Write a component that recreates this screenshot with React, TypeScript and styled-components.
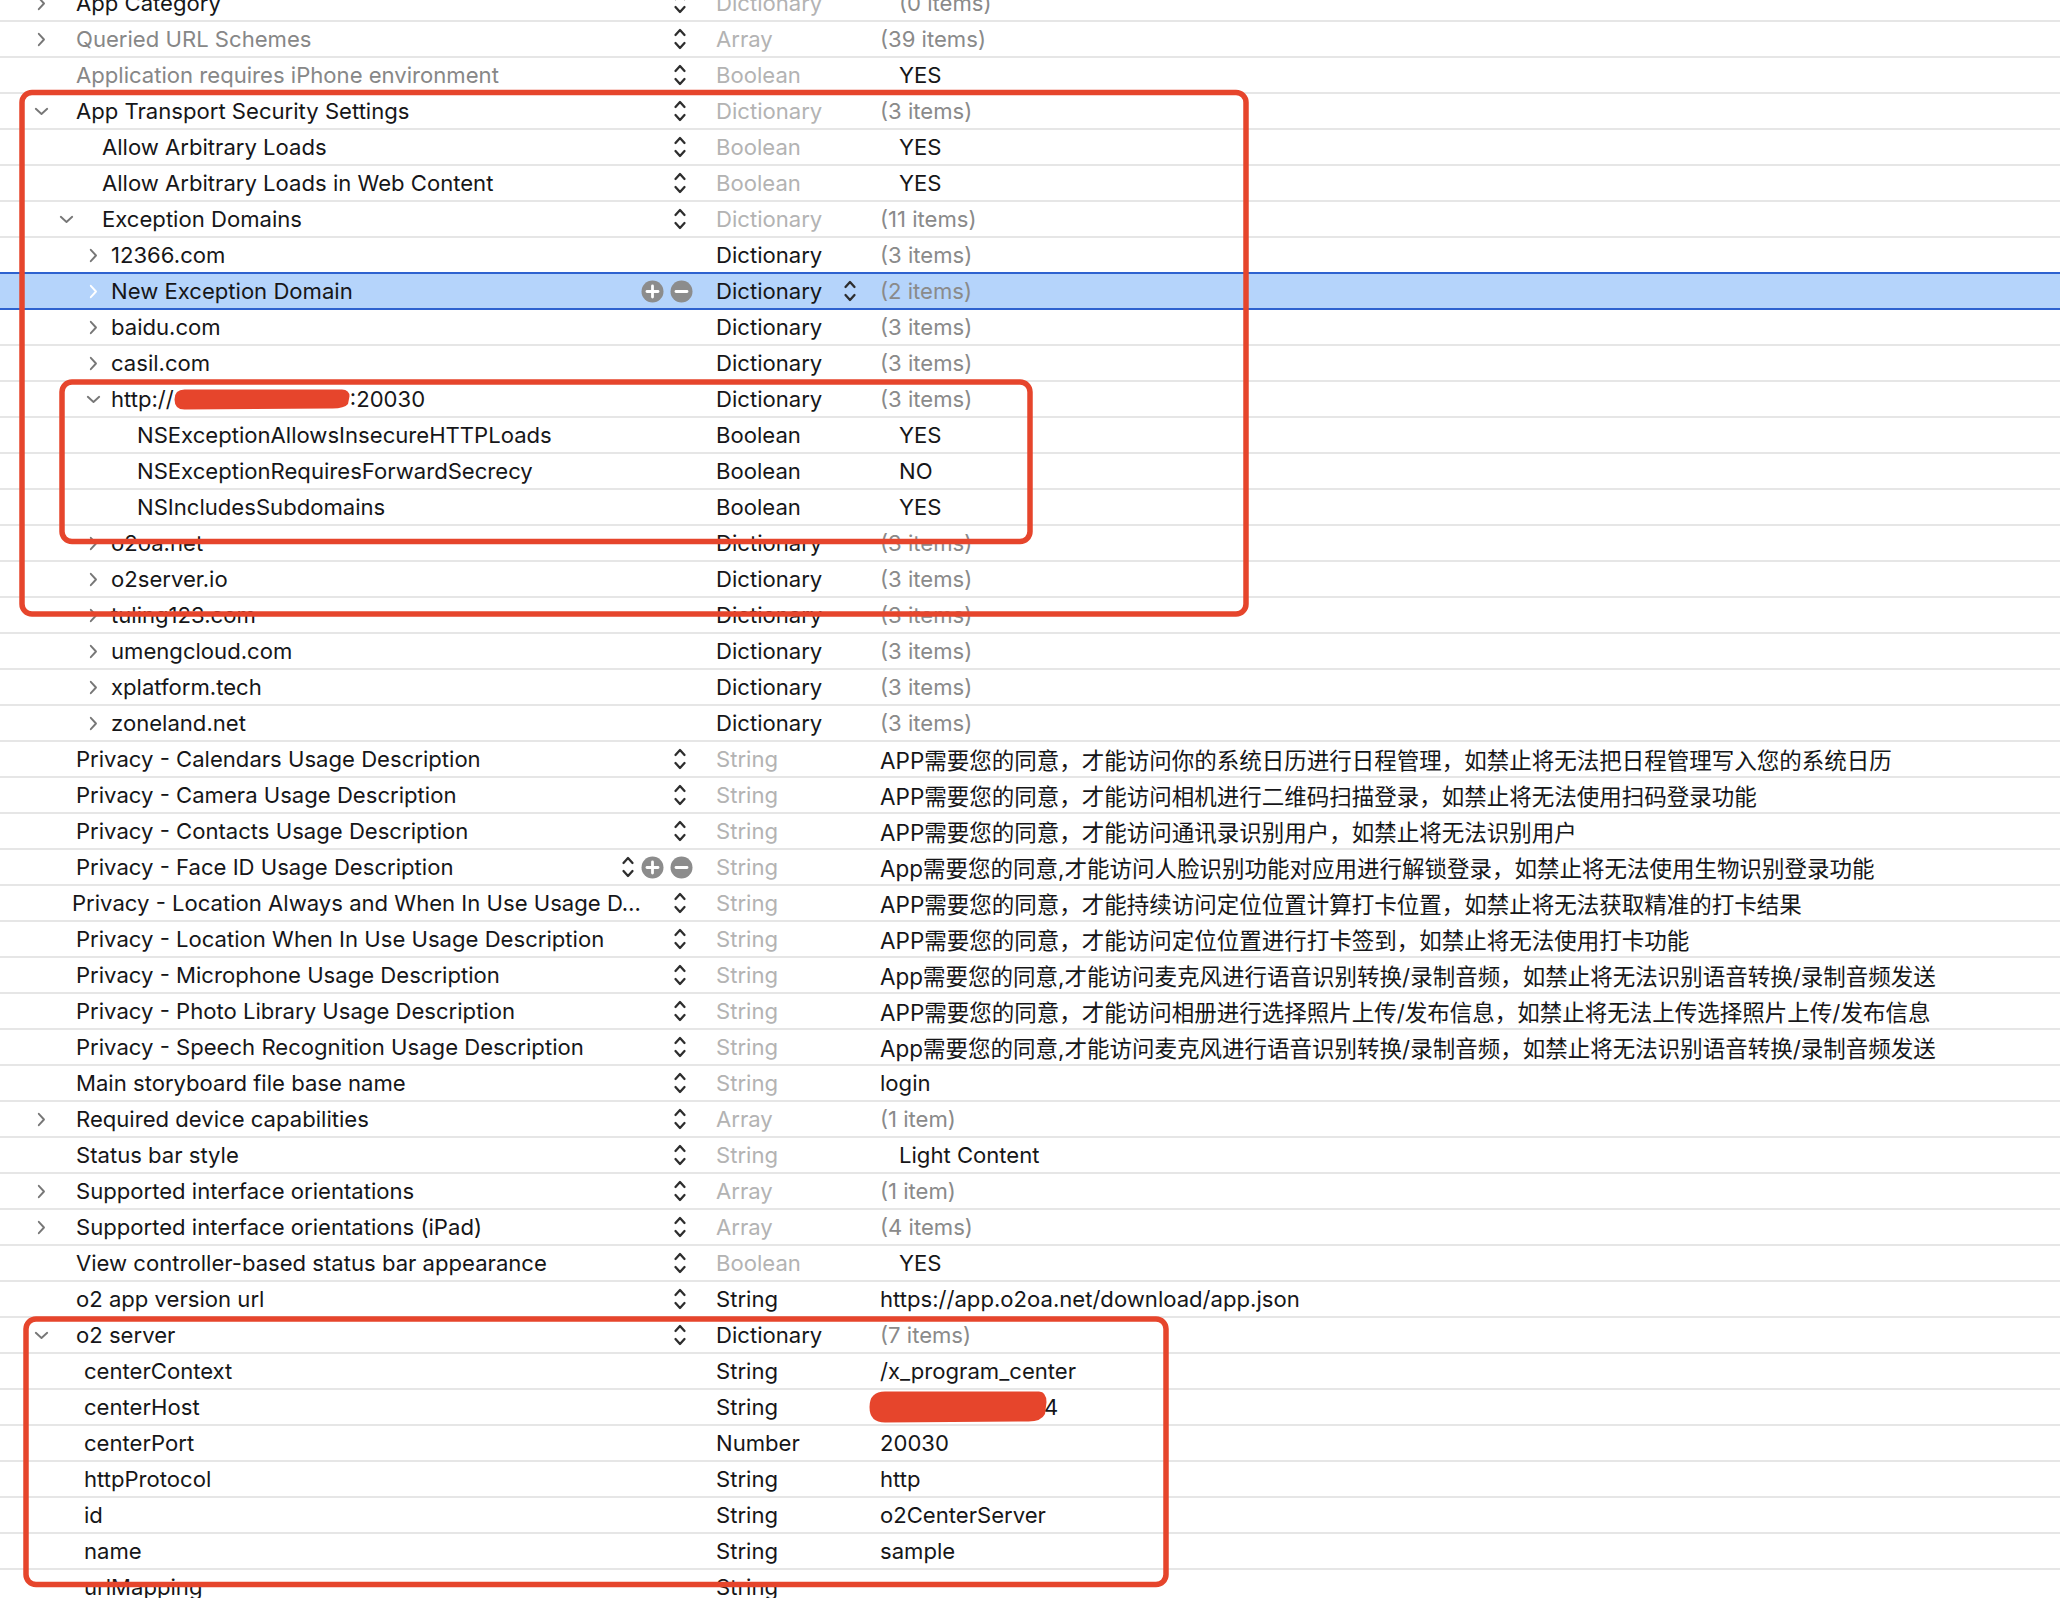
import React from "react";
import styled, { createGlobalStyle, css } from "styled-components";

const GlobalStyle = createGlobalStyle`
  html, body {
    margin: 0;
    padding: 0;
    background: #ffffff;
    overflow: hidden;
  }
  body {
    font-family: Inter, "Noto Sans", "Noto Sans CJK SC", sans-serif;
    -webkit-font-smoothing: antialiased;
  }
`;

const RED = "#e6452c";

type Tone = "dark" | "muted" | "light" | "gray" | "white";

const toneColor = (t: Tone) =>
  ({
    dark: "#161618",
    muted: "#878787",
    light: "#b3b3b3",
    gray: "#8a8a8a",
    white: "#ffffff",
  }[t]);

const Page = styled.div`
  position: relative;
  width: 2060px;
  height: 1598px;
  overflow: hidden;
`;

const List = styled.div`
  display: flex;
  flex-direction: column;
  margin-top: -14px;
`;

const Row = styled.div<{ $selected?: boolean }>`
  display: grid;
  grid-template-columns: 716px 164px 1fr;
  align-items: center;
  height: 34px;
  border-bottom: 2px solid #e6e6e6;
  font-size: 22.1px;
  color: #161618;
  ${(p) =>
    p.$selected &&
    css`
      background: #b5d4fb;
      border-bottom-color: #2e62cf;
      box-shadow: 0 -2px 0 #2e62cf;
      color: #15192a;
    `}
`;

const KeyCell = styled.div`
  display: flex;
  align-items: center;
  height: 100%;
  min-width: 0;
`;

const DisclosureSvg = styled.svg<{ $x: number; $w: number; $light?: boolean }>`
  flex-shrink: 0;
  margin-left: ${(p) => p.$x - p.$w / 2}px;
  fill: none;
  stroke: ${(p) => (p.$light ? "#ffffff" : "#777777")};
  stroke-width: 1.9;
  stroke-linecap: round;
  stroke-linejoin: round;
`;

const KeyText = styled.span<{ $offset: number; $tone: Tone }>`
  display: inline-flex;
  align-items: center;
  margin-left: ${(p) => p.$offset}px;
  white-space: nowrap;
  color: ${(p) => toneColor(p.$tone)};
`;

const Controls = styled.div`
  margin-left: auto;
  padding-right: 23px;
  display: flex;
  align-items: center;
  flex-shrink: 0;
`;

const StepperSlot = styled.span`
  width: 26px;
  display: flex;
  justify-content: center;
  align-items: center;
`;

const StepperSvg = styled.svg`
  fill: none;
  stroke: #2e2e2e;
  stroke-width: 2.3;
  stroke-linecap: round;
  stroke-linejoin: round;
`;

const RoundSvg = styled.svg<{ $gap?: number }>`
  flex-shrink: 0;
  margin-left: ${(p) => p.$gap ?? 0}px;
`;

const TypeCell = styled.div<{ $tone: Tone }>`
  display: flex;
  align-items: center;
  justify-content: space-between;
  padding-right: 17px;
  height: 100%;
  white-space: nowrap;
  color: ${(p) => toneColor(p.$tone)};
`;

const ValueCell = styled.div<{ $indent: number; $tone: Tone; $cjk?: boolean }>`
  display: flex;
  align-items: center;
  height: 100%;
  padding-left: ${(p) => p.$indent}px;
  white-space: nowrap;
  color: ${(p) => toneColor(p.$tone)};
  ${(p) =>
    p.$cjk &&
    css`
      font-family: Inter, "Noto Sans CJK SC", sans-serif;
      font-size: 22.5px;
    `}
`;

const RedactionSvg = styled.svg<{ $shift?: number }>`
  flex-shrink: 0;
  margin-left: ${(p) => p.$shift ?? 0}px;
  margin-right: ${(p) => (p.$shift ? -3 : 0)}px;
`;

const Overlay = styled.svg`
  position: absolute;
  left: 0;
  top: 0;
  pointer-events: none;
`;

const Stepper = () => (
  <StepperSlot>
    <StepperSvg width={14} height={24} viewBox="0 0 14 24">
      <path d="M2.5 8 L7 3 L11.5 8" />
      <path d="M2.5 16 L7 21 L11.5 16" />
    </StepperSvg>
  </StepperSlot>
);

const RoundButton = ({ kind, gap }: { kind: "plus" | "minus"; gap?: number }) => (
  <RoundSvg width={23} height={23} viewBox="0 0 23 23" $gap={gap}>
    <circle cx={11.5} cy={11.5} r={11} fill="#8c8c8c" />
    <path d="M6 11.5 H17" stroke="#fff" strokeWidth={2.8} strokeLinecap="round" />
    {kind === "plus" && (
      <path d="M11.5 6 V17" stroke="#fff" strokeWidth={2.8} strokeLinecap="round" />
    )}
  </RoundSvg>
);

const Disclosure = ({ dir, x, light }: { dir: "right" | "down"; x: number; light?: boolean }) =>
  dir === "right" ? (
    <DisclosureSvg width={9} height={15} viewBox="0 0 9 15" $x={x} $w={9} $light={light}>
      <path d="M1.8 1.8 L7 7.5 L1.8 13.2" />
    </DisclosureSvg>
  ) : (
    <DisclosureSvg width={15} height={9} viewBox="0 0 15 9" $x={x} $w={15} $light={light}>
      <path d="M1.8 1.8 L7.5 7 L13.2 1.8" />
    </DisclosureSvg>
  );

const Redaction = ({ w, h, shift }: { w: number; h: number; shift?: number }) => (
  <RedactionSvg width={w} height={h} viewBox={`0 0 ${w} ${h}`} $shift={shift}>
    <path
      d={`M${h / 2} 0.5 L${w - 8} 0.5 Q${w - 0.5} 1 ${w - 0.5} ${h * 0.35} L${w - 2} ${
        h * 0.72
      } Q${w - 6} ${h - 1} ${w - 20} ${h - 1.5} L${h / 2} ${h - 0.5} Q0.5 ${h - 0.5} 0.5 ${
        h / 2
      } Q0.5 0.5 ${h / 2} 0.5 Z`}
      fill={RED}
    />
  </RedactionSvg>
);

type Indent = "L0" | "L1" | "L2" | "L3" | "S1" | "T";

const INDENTS: Record<Indent, { cx: number; text: number }> = {
  L0: { cx: 41, text: 76 },
  L1: { cx: 66, text: 102 },
  L2: { cx: 93, text: 111 },
  L3: { cx: 0, text: 137 },
  S1: { cx: 0, text: 84 },
  T: { cx: 0, text: 72 },
};

type RowData = {
  key: React.ReactNode;
  indent: Indent;
  chevron?: "right" | "down";
  keyTone?: Tone;
  controls?: "stepper" | "stepperPM" | "pm";
  type: string;
  typeTone: Tone;
  typeStepper?: boolean;
  value?: React.ReactNode;
  valueTone?: Tone;
  popup?: boolean;
  cjk?: boolean;
  selected?: boolean;
};

const domain = (name: string): RowData => ({
  key: name,
  indent: "L2",
  chevron: "right",
  type: "Dictionary",
  typeTone: "dark",
  value: "(3 items)",
  valueTone: "gray",
});

const privacy = (name: string, value: string, extra?: Partial<RowData>): RowData => ({
  key: name,
  indent: "L0",
  controls: "stepper",
  type: "String",
  typeTone: "light",
  value,
  valueTone: "dark",
  cjk: true,
  ...extra,
});

const serverChild = (name: string, type: string, value?: React.ReactNode): RowData => ({
  key: name,
  indent: "S1",
  type,
  typeTone: "dark",
  value,
  valueTone: "dark",
});

const rows: RowData[] = [
  { key: "App Category", indent: "L0", chevron: "right", controls: "stepper", type: "Dictionary", typeTone: "light", value: "(0 items)", valueTone: "gray", popup: true },
  { key: "Queried URL Schemes", indent: "L0", chevron: "right", keyTone: "muted", controls: "stepper", type: "Array", typeTone: "light", value: "(39 items)", valueTone: "gray" },
  { key: "Application requires iPhone environment", indent: "L0", keyTone: "muted", controls: "stepper", type: "Boolean", typeTone: "light", value: "YES", valueTone: "dark", popup: true },
  { key: "App Transport Security Settings", indent: "L0", chevron: "down", controls: "stepper", type: "Dictionary", typeTone: "light", value: "(3 items)", valueTone: "gray" },
  { key: "Allow Arbitrary Loads", indent: "L1", controls: "stepper", type: "Boolean", typeTone: "light", value: "YES", valueTone: "dark", popup: true },
  { key: "Allow Arbitrary Loads in Web Content", indent: "L1", controls: "stepper", type: "Boolean", typeTone: "light", value: "YES", valueTone: "dark", popup: true },
  { key: "Exception Domains", indent: "L1", chevron: "down", controls: "stepper", type: "Dictionary", typeTone: "light", value: "(11 items)", valueTone: "gray" },
  domain("12366.com"),
  { key: "New Exception Domain", indent: "L2", chevron: "right", controls: "pm", type: "Dictionary", typeTone: "dark", typeStepper: true, value: "(2 items)", valueTone: "gray", selected: true },
  domain("baidu.com"),
  domain("casil.com"),
  {
    key: (
      <>
        http://
        <Redaction w={176} h={21} />
        :20030
      </>
    ),
    indent: "L2",
    chevron: "down",
    type: "Dictionary",
    typeTone: "dark",
    value: "(3 items)",
    valueTone: "gray",
  },
  { key: "NSExceptionAllowsInsecureHTTPLoads", indent: "L3", type: "Boolean", typeTone: "dark", value: "YES", valueTone: "dark", popup: true },
  { key: "NSExceptionRequiresForwardSecrecy", indent: "L3", type: "Boolean", typeTone: "dark", value: "NO", valueTone: "dark", popup: true },
  { key: "NSIncludesSubdomains", indent: "L3", type: "Boolean", typeTone: "dark", value: "YES", valueTone: "dark", popup: true },
  domain("o2oa.net"),
  domain("o2server.io"),
  domain("tuling123.com"),
  domain("umengcloud.com"),
  domain("xplatform.tech"),
  domain("zoneland.net"),
  privacy("Privacy - Calendars Usage Description", "APP需要您的同意，才能访问你的系统日历进行日程管理，如禁止将无法把日程管理写入您的系统日历"),
  privacy("Privacy - Camera Usage Description", "APP需要您的同意，才能访问相机进行二维码扫描登录，如禁止将无法使用扫码登录功能"),
  privacy("Privacy - Contacts Usage Description", "APP需要您的同意，才能访问通讯录识别用户，如禁止将无法识别用户"),
  privacy("Privacy - Face ID Usage Description", "App需要您的同意,才能访问人脸识别功能对应用进行解锁登录，如禁止将无法使用生物识别登录功能", { controls: "stepperPM" }),
  privacy("Privacy - Location Always and When In Use Usage D…", "APP需要您的同意，才能持续访问定位位置计算打卡位置，如禁止将无法获取精准的打卡结果", { indent: "T" }),
  privacy("Privacy - Location When In Use Usage Description", "APP需要您的同意，才能访问定位位置进行打卡签到，如禁止将无法使用打卡功能"),
  privacy("Privacy - Microphone Usage Description", "App需要您的同意,才能访问麦克风进行语音识别转换/录制音频，如禁止将无法识别语音转换/录制音频发送"),
  privacy("Privacy - Photo Library Usage Description", "APP需要您的同意，才能访问相册进行选择照片上传/发布信息，如禁止将无法上传选择照片上传/发布信息"),
  privacy("Privacy - Speech Recognition Usage Description", "App需要您的同意,才能访问麦克风进行语音识别转换/录制音频，如禁止将无法识别语音转换/录制音频发送"),
  { key: "Main storyboard file base name", indent: "L0", controls: "stepper", type: "String", typeTone: "light", value: "login", valueTone: "dark" },
  { key: "Required device capabilities", indent: "L0", chevron: "right", controls: "stepper", type: "Array", typeTone: "light", value: "(1 item)", valueTone: "gray" },
  { key: "Status bar style", indent: "L0", controls: "stepper", type: "String", typeTone: "light", value: "Light Content", valueTone: "dark", popup: true },
  { key: "Supported interface orientations", indent: "L0", chevron: "right", controls: "stepper", type: "Array", typeTone: "light", value: "(1 item)", valueTone: "gray" },
  { key: "Supported interface orientations (iPad)", indent: "L0", chevron: "right", controls: "stepper", type: "Array", typeTone: "light", value: "(4 items)", valueTone: "gray" },
  { key: "View controller-based status bar appearance", indent: "L0", controls: "stepper", type: "Boolean", typeTone: "light", value: "YES", valueTone: "dark", popup: true },
  { key: "o2 app version url", indent: "L0", controls: "stepper", type: "String", typeTone: "dark", value: "https://app.o2oa.net/download/app.json", valueTone: "dark" },
  { key: "o2 server", indent: "L0", chevron: "down", controls: "stepper", type: "Dictionary", typeTone: "dark", value: "(7 items)", valueTone: "gray" },
  serverChild("centerContext", "String", "/x_program_center"),
  serverChild(
    "centerHost",
    "String",
    <>
      <Redaction w={178} h={32} shift={-11} />4
    </>
  ),
  serverChild("centerPort", "Number", "20030"),
  serverChild("httpProtocol", "String", "http"),
  serverChild("id", "String", "o2CenterServer"),
  serverChild("name", "String", "sample"),
  serverChild("urlMapping", "String"),
];

const PlistRow = ({ r }: { r: RowData }) => {
  const ind = INDENTS[r.indent];
  const chevW = r.chevron === "right" ? 9 : 15;
  const textOffset = r.chevron ? ind.text - (ind.cx + chevW / 2) : ind.text;
  return (
    <Row $selected={r.selected}>
      <KeyCell>
        {r.chevron && <Disclosure dir={r.chevron} x={ind.cx} light={r.selected} />}
        <KeyText $offset={textOffset} $tone={r.keyTone ?? "dark"}>
          {r.key}
        </KeyText>
        {r.controls && (
          <Controls>
            {(r.controls === "stepper" || r.controls === "stepperPM") && <Stepper />}
            {(r.controls === "pm" || r.controls === "stepperPM") && (
              <>
                <RoundButton kind="plus" />
                <RoundButton kind="minus" gap={6} />
              </>
            )}
          </Controls>
        )}
      </KeyCell>
      <TypeCell $tone={r.typeTone}>
        <span>{r.type}</span>
        {r.typeStepper && <Stepper />}
      </TypeCell>
      <ValueCell $indent={r.popup ? 19 : 0} $tone={r.valueTone ?? "dark"} $cjk={r.cjk}>
        {r.value}
      </ValueCell>
    </Row>
  );
};

export default function App() {
  return (
    <Page>
      <GlobalStyle />
      <List>
        {rows.map((r, i) => (
          <PlistRow key={i} r={r} />
        ))}
      </List>
      <Overlay width={2060} height={1598} viewBox="0 0 2060 1598">
        <g fill="none" stroke={RED} strokeWidth={5.5} strokeLinejoin="round">
          <rect x={22} y={92.5} width={1224} height={521.5} rx={10} />
          <rect x={62} y={382} width={968} height={159.5} rx={10} />
          <rect x={26} y={1319} width={1140} height={265.5} rx={10} />
        </g>
      </Overlay>
    </Page>
  );
}
